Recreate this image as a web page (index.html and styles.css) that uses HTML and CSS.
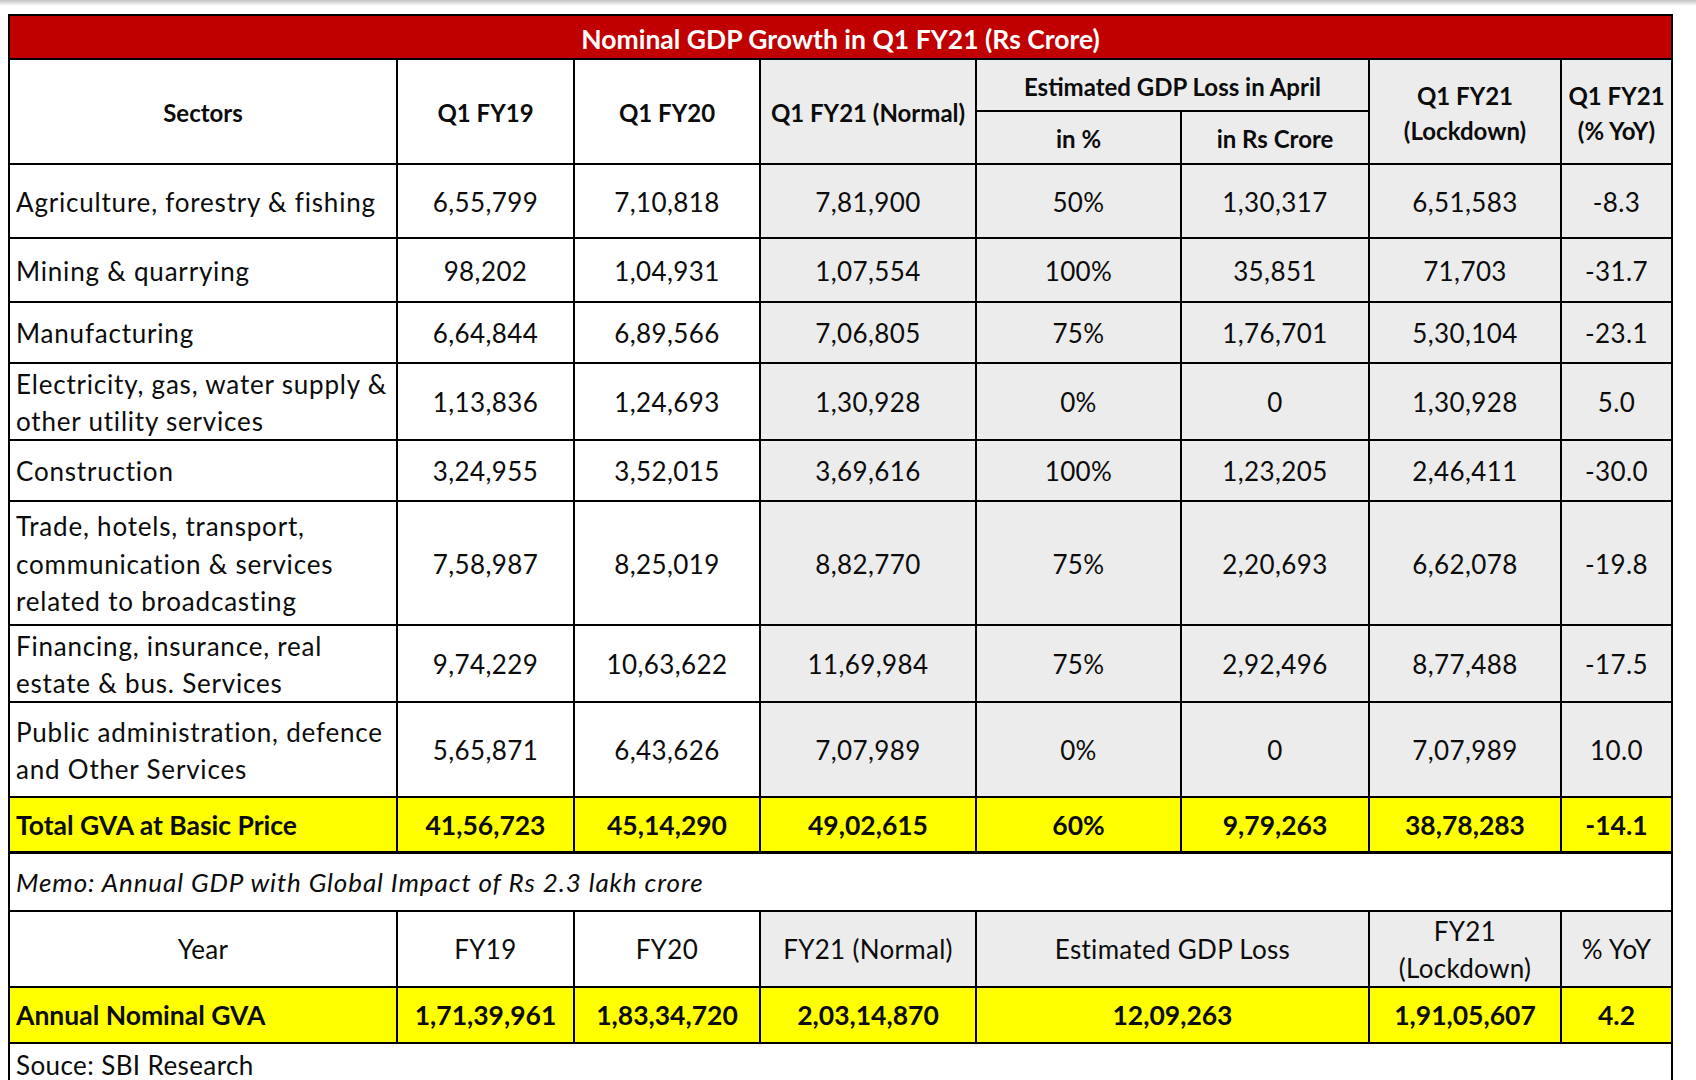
FILE: index.html
```html
<!DOCTYPE html>
<html lang="en">
<head>
<meta charset="utf-8">
<title>Nominal GDP Growth in Q1 FY21</title>
<link rel="stylesheet" href="styles.css">
</head>
<body>
<div class="topshade"></div>
<div class="page">
  <div class="sheet">
    <div class="c title all">Nominal GDP Growth in Q1 FY21 (Rs Crore)</div>

    <div class="c b rs2">Sectors</div>
    <div class="c b rs2">Q1 FY19</div>
    <div class="c b rs2">Q1 FY20</div>
    <div class="c b g rs2">Q1 FY21 (Normal)</div>
    <div class="c b g cs2">Estimated GDP Loss in April</div>
    <div class="c b g rs2">Q1 FY21<br>(Lockdown)</div>
    <div class="c b g rs2">Q1 FY21<br>(% YoY)</div>
    <div class="c b g">in %</div>
    <div class="c b g">in Rs Crore</div>

    <div class="c l sec">Agriculture, forestry &amp; fishing</div>
    <div class="c n">6,55,799</div><div class="c n">7,10,818</div><div class="c n g">7,81,900</div><div class="c n g">50%</div><div class="c n g">1,30,317</div><div class="c n g">6,51,583</div><div class="c n g">-8.3</div>

    <div class="c l sec">Mining &amp; quarrying</div>
    <div class="c n">98,202</div><div class="c n">1,04,931</div><div class="c n g">1,07,554</div><div class="c n g">100%</div><div class="c n g">35,851</div><div class="c n g">71,703</div><div class="c n g">-31.7</div>

    <div class="c l sec">Manufacturing</div>
    <div class="c n">6,64,844</div><div class="c n">6,89,566</div><div class="c n g">7,06,805</div><div class="c n g">75%</div><div class="c n g">1,76,701</div><div class="c n g">5,30,104</div><div class="c n g">-23.1</div>

    <div class="c l sec">Electricity, gas, water supply &amp;<br>other utility services</div>
    <div class="c n">1,13,836</div><div class="c n">1,24,693</div><div class="c n g">1,30,928</div><div class="c n g">0%</div><div class="c n g">0</div><div class="c n g">1,30,928</div><div class="c n g">5.0</div>

    <div class="c l sec">Construction</div>
    <div class="c n">3,24,955</div><div class="c n">3,52,015</div><div class="c n g">3,69,616</div><div class="c n g">100%</div><div class="c n g">1,23,205</div><div class="c n g">2,46,411</div><div class="c n g">-30.0</div>

    <div class="c l sec">Trade, hotels, transport,<br>communication &amp; services<br>related to broadcasting</div>
    <div class="c n">7,58,987</div><div class="c n">8,25,019</div><div class="c n g">8,82,770</div><div class="c n g">75%</div><div class="c n g">2,20,693</div><div class="c n g">6,62,078</div><div class="c n g">-19.8</div>

    <div class="c l sec">Financing, insurance, real<br>estate &amp; bus. Services</div>
    <div class="c n">9,74,229</div><div class="c n">10,63,622</div><div class="c n g">11,69,984</div><div class="c n g">75%</div><div class="c n g">2,92,496</div><div class="c n g">8,77,488</div><div class="c n g">-17.5</div>

    <div class="c l sec">Public administration, defence<br>and Other Services</div>
    <div class="c n">5,65,871</div><div class="c n">6,43,626</div><div class="c n g">7,07,989</div><div class="c n g">0%</div><div class="c n g">0</div><div class="c n g">7,07,989</div><div class="c n g">10.0</div>

    <div class="c l y">Total GVA at Basic Price</div>
    <div class="c y">41,56,723</div><div class="c y">45,14,290</div><div class="c y">49,02,615</div><div class="c y">60%</div><div class="c y">9,79,263</div><div class="c y">38,78,283</div><div class="c y">-14.1</div>

    <div class="c l all memo">Memo: Annual GDP with Global Impact of Rs 2.3 lakh crore</div>

    <div class="c yr">Year</div>
    <div class="c yr">FY19</div>
    <div class="c yr">FY20</div>
    <div class="c g yr">FY21 (Normal)</div>
    <div class="c g yr cs2">Estimated GDP Loss</div>
    <div class="c g yr">FY21<br>(Lockdown)</div>
    <div class="c g yr">% YoY</div>

    <div class="c l y">Annual Nominal GVA</div>
    <div class="c y">1,71,39,961</div><div class="c y">1,83,34,720</div><div class="c y">2,03,14,870</div><div class="c y cs2">12,09,263</div><div class="c y">1,91,05,607</div><div class="c y">4.2</div>

    <div class="c l all source">Souce: SBI Research</div>
  </div>
</div>
</body>
</html>
```
FILE: styles.css
```css
* { box-sizing: border-box; }
html, body { margin: 0; background: #fff; }
body { font-family: Lato, "Open Sans", sans-serif; color: #0c0c0c; }

.topshade { height: 6px; background: linear-gradient(#c2c2c2, #ffffff); }
.page { padding: 8px 0 0 8px; }

.sheet {
  display: grid;
  width: 1665px;
  background: #000;
  padding: 2px 2px 0 2px;
  gap: 2px;
  grid-template-columns: 386px 175px 184px 214px 203px 186px 190px 109px;
  grid-template-rows: 42px 50px 51px 72px 62px 59px 75px 59px 122px 75px 93px 53px 57px 74px 54px 60px;
}

.c {
  background: #fff;
  display: flex;
  align-items: center;
  justify-content: center;
  text-align: center;
  font-size: 26px;
  line-height: 37.5px;
  white-space: nowrap;
  padding-top: 3px;
}
.g { background: #ececec; }
.b { font-weight: 700; font-size: 24px; line-height: 35px; padding-top: 2px; }
.n { letter-spacing: 0.4px; }
.y { background: #ffff00; font-weight: 700; font-size: 26.5px; padding-top: 2px; }
.l { justify-content: flex-start; text-align: left; padding-left: 6px; }
.sec { letter-spacing: 0.8px; }
.yr { letter-spacing: 0.3px; padding-top: 2px; }
.all { grid-column: 1 / -1; }
.rs2 { grid-row: span 2; }
.cs2 { grid-column: span 2; }
.title { background: #c00000; color: #fff; font-weight: 700; font-size: 26.5px; padding-top: 6px; }
.memo { font-style: italic; border-top: 1px solid #000; letter-spacing: 0.9px; padding-top: 2px; }
.source { align-items: flex-start; padding-top: 3px; letter-spacing: 0.4px; }
```
